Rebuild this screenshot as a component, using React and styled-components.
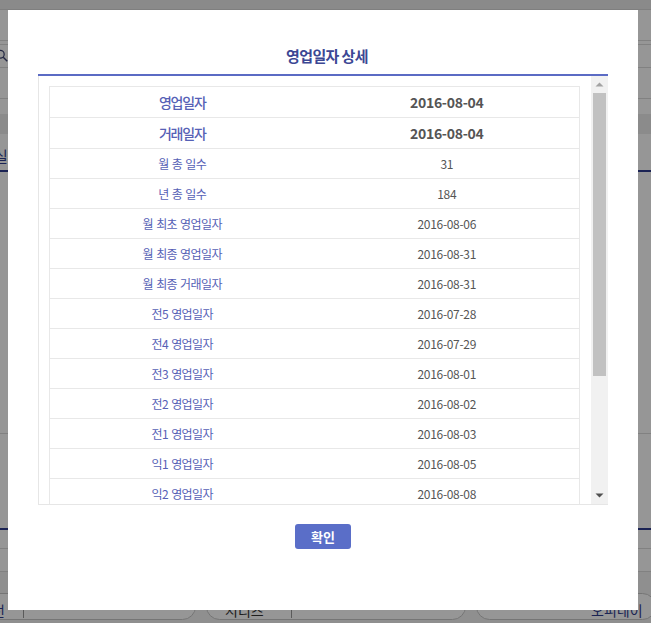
import React from 'react';
import styled, { createGlobalStyle } from 'styled-components';

const GlobalStyle = createGlobalStyle`
  html, body {
    margin: 0;
    padding: 0;
    height: 100%;
    overflow: hidden;
  }
  body {
    font-family: "Noto Sans CJK KR", "Noto Sans", sans-serif;
    background: #fff;
  }
`;

const rows = [
  { label: '영업일자', value: '2016-08-04', big: true },
  { label: '거래일자', value: '2016-08-04', big: true },
  { label: '월 총 일수', value: '31' },
  { label: '년 총 일수', value: '184' },
  { label: '월 최초 영업일자', value: '2016-08-06' },
  { label: '월 최종 영업일자', value: '2016-08-31' },
  { label: '월 최종 거래일자', value: '2016-08-31' },
  { label: '전5 영업일자', value: '2016-07-28' },
  { label: '전4 영업일자', value: '2016-07-29' },
  { label: '전3 영업일자', value: '2016-08-01' },
  { label: '전2 영업일자', value: '2016-08-02' },
  { label: '전1 영업일자', value: '2016-08-03' },
  { label: '익1 영업일자', value: '2016-08-05' },
  { label: '익2 영업일자', value: '2016-08-08' },
  { label: '익3 영업일자', value: '2016-08-09' },
  { label: '익4 영업일자', value: '2016-08-10' },
  { label: '익5 영업일자', value: '2016-08-11' },
  { label: '월 영업일수', value: '22' },
  { label: '년 영업일수', value: '124' },
];

export default function App() {
  return (
    <>
      <GlobalStyle />
      <Page>
        <TopStrip />
        <PageRow $h={30} />
        <SearchRow>
          <SearchIcon viewBox="0 0 16 16">
            <circle cx="6" cy="6" r="4.5" fill="none" stroke="#3a4270" strokeWidth="1.4" />
            <path d="M9.4 9.4 14 14" stroke="#3a4270" strokeWidth="1.6" />
          </SearchIcon>
        </SearchRow>
        <PageRow $h={30} />
        <PageRow $h={15} $plain />
        <Band />
        <TabRow>
          <TabText>실적</TabText>
        </TabRow>
        <PageRow $h={261} />
        <PageRow $h={94} $navy />
        <PageRow $h={18} />
        <PageRow $h={22} />
        <BottomBar>
          <Pill $w={222} $ml={-26} $pl={4}>
            <PillText $dark>노선</PillText>
            <PillDivider $at={48} />
          </Pill>
          <Pill $w={260} $ml={10} $pl={18}>
            <PillText>시리즈</PillText>
            <PillDivider $at={84} />
          </Pill>
          <Pill $w={180} $ml={10} $pl={114}>
            <PillText $dark>오피네이</PillText>
          </Pill>
        </BottomBar>
      </Page>
      <Overlay />
      <Modal>
        <Header>
          <Title>영업일자 상세</Title>
        </Header>
        <ScrollArea>
          <Viewport>
            <Table>
              <tbody>
                {rows.map((r) => (
                  <Row key={r.label} $big={r.big}>
                    <Label $big={r.big}>{r.label}</Label>
                    <Value $big={r.big}>{r.value}</Value>
                  </Row>
                ))}
              </tbody>
            </Table>
          </Viewport>
          <ScrollTrack>
            <ScrollButton>
              <svg width="17" height="17" viewBox="0 0 17 17">
                <path d="M4.5 10.5h8l-4-4z" fill="#a3a3a3" />
              </svg>
            </ScrollButton>
            <Thumb />
            <TrackRest />
            <ScrollButton>
              <svg width="17" height="17" viewBox="0 0 17 17">
                <path d="M4.5 6.5h8l-4 4z" fill="#505050" />
              </svg>
            </ScrollButton>
          </ScrollTrack>
        </ScrollArea>
        <Footer>
          <ConfirmButton>확인</ConfirmButton>
        </Footer>
      </Modal>
    </>
  );
}

const Page = styled.div`
  width: 100%;
  height: 100vh;
  display: flex;
  flex-direction: column;
  background: #fff;
  overflow: hidden;
`;

const TopStrip = styled.div`
  height: 9px;
  flex: none;
  background: #ebebeb;
  border-bottom: 1px solid #d8d8d8;
`;

const PageRow = styled.div`
  height: ${(p) => p.$h}px;
  flex: none;
  border-bottom: ${(p) =>
    p.$plain ? 'none' : p.$navy ? '2px solid #2f3d8f' : '1px solid #dcdcdc'};
`;

const SearchRow = styled.div`
  height: 22px;
  flex: none;
  display: flex;
  align-items: center;
  border-top: 1px solid #dcdcdc;
  border-bottom: 1px solid #dcdcdc;
  margin-top: 3px;
`;

const SearchIcon = styled.svg`
  width: 14px;
  height: 14px;
  margin-left: -5px;
`;

const Band = styled.div`
  height: 20px;
  flex: none;
  background: #ececec;
`;

const TabRow = styled.div`
  height: 38px;
  flex: none;
  display: flex;
  align-items: flex-end;
  padding-bottom: 4px;
  box-sizing: border-box;
  border-bottom: 2px solid #2f3d8f;
`;

const TabText = styled.span`
  font-size: 15px;
  color: #2f3d8f;
  margin-left: -6px;
`;

const BottomBar = styled.div`
  flex: 1;
  display: flex;
  align-items: flex-start;
  padding-top: 21px;
  background: #f4f4f4;
`;

const Pill = styled.div`
  position: relative;
  width: ${(p) => p.$w}px;
  margin-left: ${(p) => p.$ml}px;
  height: 27px;
  box-sizing: border-box;
  flex: none;
  border: 1px solid #c8c8c8;
  border-radius: 14px;
  background: #fff;
  display: flex;
  align-items: flex-end;
  padding-left: ${(p) => p.$pl}px;
  white-space: nowrap;
`;

const PillText = styled.span`
  font-size: 14px;
  line-height: 18px;
  color: ${(p) => (p.$dark ? '#2f3d8f' : '#333')};
`;

const PillDivider = styled.span`
  position: absolute;
  left: ${(p) => p.$at}px;
  top: 12px;
  width: 1px;
  height: 12px;
  background: #999;
`;

const Overlay = styled.div`
  position: fixed;
  inset: 0;
  background: rgba(0, 0, 0, 0.41);
`;

const Modal = styled.div`
  position: fixed;
  left: 8px;
  top: 10px;
  width: 630px;
  height: 600px;
  background: #fff;
  box-sizing: border-box;
  padding: 0 30px;
  display: flex;
  flex-direction: column;
`;

const Header = styled.div`
  padding: 36px 0 8px 8px;
  border-bottom: 2px solid #5b6bc4;
  text-align: center;
`;

const Title = styled.h2`
  margin: 0;
  font-size: 15px;
  line-height: 20px;
  font-weight: 700;
  color: #3c4794;
  letter-spacing: -0.6px;
`;

const ScrollArea = styled.div`
  height: 429px;
  box-sizing: border-box;
  display: flex;
  border-left: 1px solid #e6e6e6;
  border-bottom: 1px solid #e6e6e6;
`;

const Viewport = styled.div`
  flex: 1;
  overflow: hidden;
  padding: 10px 11px 0 10px;
`;

const ScrollTrack = styled.div`
  width: 17px;
  flex: none;
  display: flex;
  flex-direction: column;
  background: #f1f1f1;
`;

const ScrollButton = styled.div`
  height: 17px;
  flex: none;
  display: flex;

  svg {
    display: block;
  }
`;

const Thumb = styled.div`
  height: 283px;
  flex: none;
  margin: 0 2px;
  background: #c1c1c1;
`;

const TrackRest = styled.div`
  flex: 1;
`;

const Table = styled.table`
  width: 100%;
  border-collapse: collapse;
  table-layout: fixed;
  border: 1px solid #e8e8e8;
`;

const Row = styled.tr`
  height: ${(p) => (p.$big ? 31 : 30)}px;
  border-bottom: 1px solid #e8e8e8;
`;

const Cell = styled.td`
  padding: 0;
  text-align: center;
  vertical-align: middle;
  line-height: 18px;
`;

const Label = styled(Cell)`
  color: #5661b6;
  font-size: ${(p) => (p.$big ? '14px' : '12px')};
  font-weight: ${(p) => (p.$big ? 500 : 400)};
  letter-spacing: ${(p) => (p.$big ? '-1.2px' : '-0.6px')};
  word-spacing: 1px;
`;

const Value = styled(Cell)`
  color: #555;
  font-size: ${(p) => (p.$big ? '14px' : '12px')};
  font-weight: ${(p) => (p.$big ? 700 : 400)};
  letter-spacing: -0.3px;
`;

const Footer = styled.div`
  display: flex;
  justify-content: center;
  padding-top: 19px;
`;

const ConfirmButton = styled.button`
  width: 56px;
  height: 25px;
  border: none;
  border-radius: 3px;
  background: #5a6ec8;
  color: #fff;
  font-family: "Noto Sans CJK KR", sans-serif;
  font-size: 13px;
  font-weight: 700;
  padding: 0;
  cursor: pointer;
`;
